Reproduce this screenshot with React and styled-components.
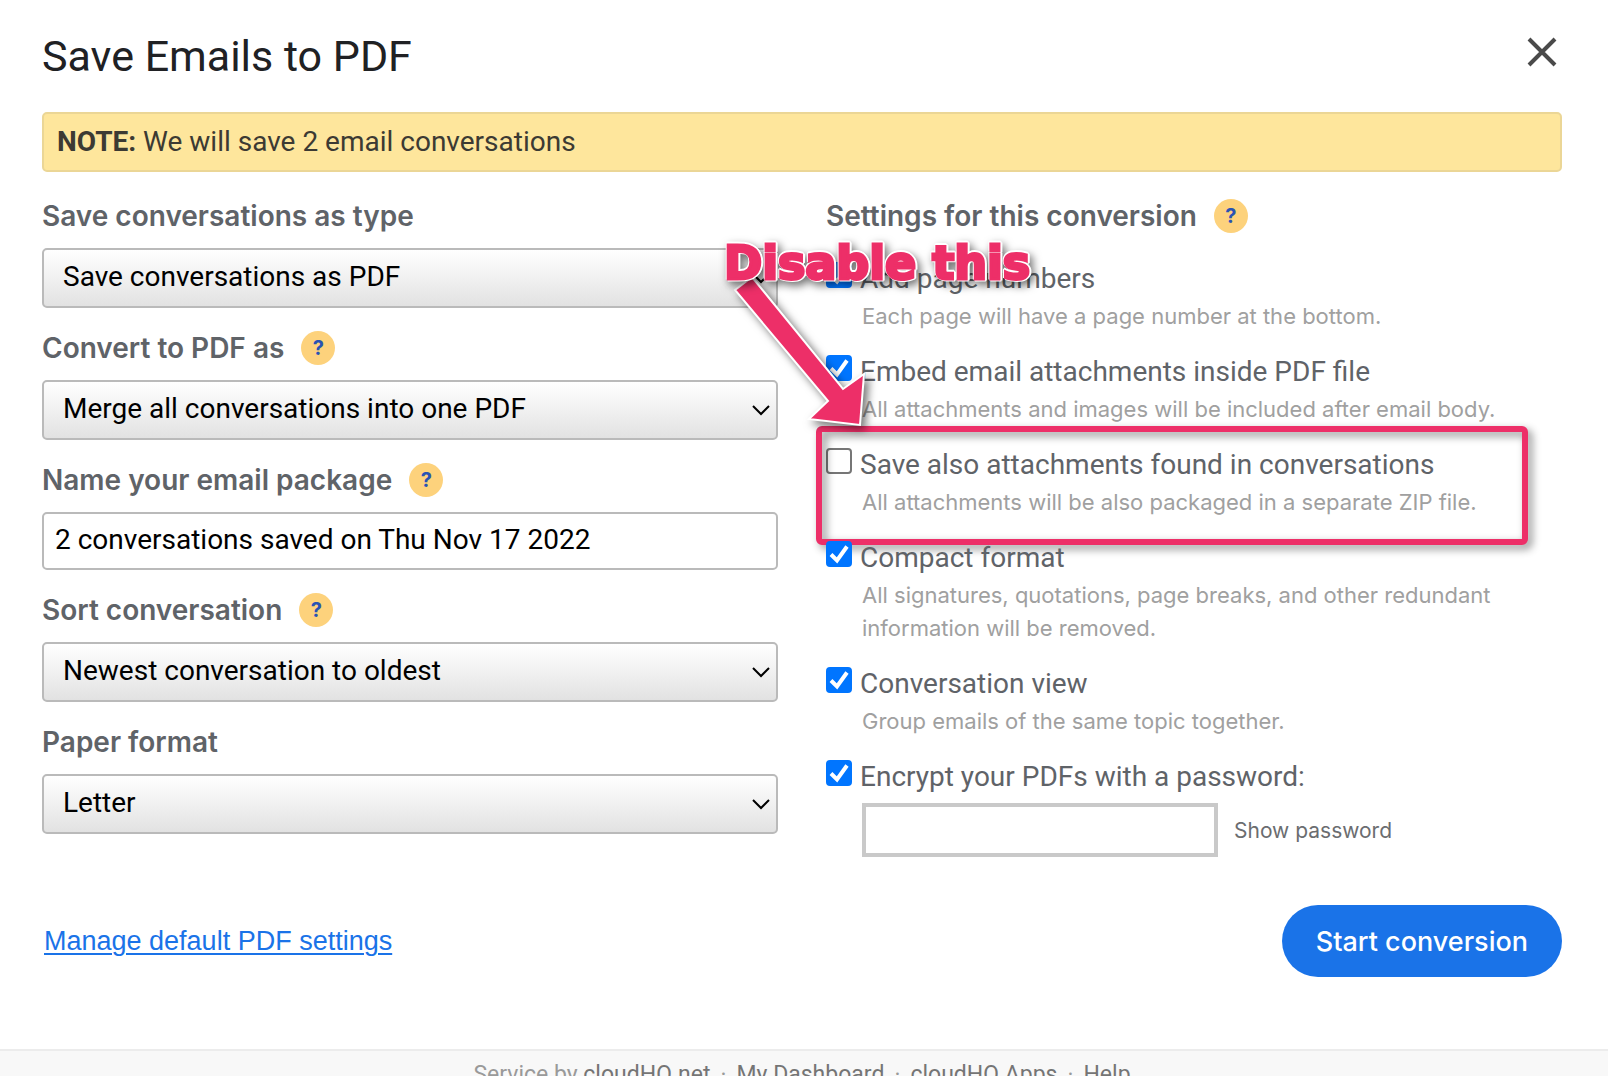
import React, { useState } from "react";
import styled, { createGlobalStyle } from "styled-components";

const GlobalStyle = createGlobalStyle`
  * {
    box-sizing: border-box;
  }

  html {
    overflow: hidden;
  }

  body {
    margin: 0;
    background-color: #ffffff;
    font-family: Roboto, "Liberation Sans", sans-serif;
    font-size: 28px;
    color: #5f6368;
  }
`;

const Dialog = styled.main`
  padding: 28px 46px 72px 42px;
`;

const Header = styled.header`
  display: flex;
  align-items: center;
  justify-content: space-between;
  height: 56px;
  margin-bottom: 28px;
`;

const Title = styled.h1`
  margin: 0;
  font-size: 43px;
  line-height: 56px;
  font-weight: 400;
  color: #202124;
`;

const CloseButton = styled.button`
  display: flex;
  align-items: center;
  justify-content: center;
  width: 40px;
  height: 48px;
  margin-bottom: 8px;
  padding: 0;
  border: none;
  background: none;
  color: #4a4a4a;
  cursor: pointer;
`;

const Note = styled.p`
  margin: 0;
  padding: 0 13px;
  border: 2px solid #ebd696;
  border-radius: 5px;
  background-color: #fee69c;
  line-height: 56px;
  color: #3c3a33;

  strong {
    font-weight: 700;
  }
`;

const Columns = styled.div`
  display: grid;
  grid-template-columns: 1fr 1fr;
  gap: 48px;
  margin-top: 26px;
`;

const FieldColumn = styled.div`
  display: flex;
  flex-direction: column;
  gap: 22px;
`;

const Heading = styled.div`
  display: flex;
  align-items: center;
  gap: 17px;
  height: 36px;
  font-family: Inter, "Liberation Sans", sans-serif;
  font-weight: 600;
`;

const HelpButton = styled.button`
  width: 34px;
  height: 34px;
  padding: 0;
  border: none;
  border-radius: 50%;
  background-color: #fdd27c;
  color: #2952b3;
  font-family: Inter, "Liberation Sans", sans-serif;
  font-size: 20px;
  font-weight: 700;
  line-height: 34px;
  cursor: pointer;
`;

const SelectBox = styled.div`
  position: relative;
  margin-top: 14px;

  svg {
    position: absolute;
    top: 0;
    bottom: 0;
    right: 8px;
    margin: auto;
    pointer-events: none;
  }
`;

const Select = styled.select`
  display: block;
  appearance: none;
  width: 100%;
  height: 60px;
  padding: 0 40px 3px 19px;
  border: 2px solid #bababa;
  border-radius: 5px;
  background: linear-gradient(#ffffff, #e2e2e2);
  font: inherit;
  color: #000000;
`;

const TextInput = styled.input`
  display: block;
  width: 100%;
  height: 58px;
  margin-top: 14px;
  padding: 0 11px 3px;
  border: 2px solid #bababa;
  border-radius: 5px;
  background-color: #ffffff;
  font: inherit;
  color: #000000;
`;

const SettingsColumn = styled.section`
  position: relative;
`;

const OptionList = styled.div`
  display: flex;
  flex-direction: column;
  gap: 22px;
  margin-top: 28px;
`;

const Option = styled.div`
  position: relative;
`;

const OptionRow = styled.div`
  display: flex;
  align-items: flex-start;
  gap: 8px;
  line-height: 34px;
`;

const CheckBox = styled.span`
  position: relative;
  width: 26px;
  height: 26px;

  svg {
    position: absolute;
    top: 0;
    left: 0;
    pointer-events: none;
  }
`;

const CheckInput = styled.input`
  display: block;
  appearance: none;
  width: 26px;
  height: 26px;
  margin: 0;
  border: 2px solid #767676;
  border-radius: 4px;
  background-color: #ffffff;

  &:checked {
    border-color: #0075ff;
    background-color: #0075ff;
  }
`;

const Hint = styled.p`
  margin: 4px 0 0 36px;
  font-family: Inter, "Liberation Sans", sans-serif;
  font-size: 22px;
  line-height: 33px;
  color: #a0a0a0;
`;

const PasswordRow = styled.div`
  display: flex;
  align-items: center;
  gap: 16px;
  margin: 9px 0 0 36px;
`;

const PasswordInput = styled.input`
  width: 356px;
  height: 54px;
  padding: 0 12px;
  border: 4px solid #c9c9c9;
  background-color: #ffffff;
  font: inherit;
`;

const ShowPassword = styled.button`
  padding: 0;
  border: none;
  background: none;
  font-family: Inter, "Liberation Sans", sans-serif;
  font-size: 21px;
  color: #6b6d70;
  cursor: pointer;
`;

const Actions = styled.div`
  display: flex;
  align-items: center;
  justify-content: space-between;
  margin-top: 48px;
`;

const ManageLink = styled.a`
  margin-left: 2px;
  font-family: "Liberation Sans", Arial, sans-serif;
  font-size: 27px;
  color: #1a73e8;
  text-decoration-thickness: 2px;
  text-underline-offset: 3px;
`;

const StartButton = styled.button`
  height: 72px;
  padding: 0 34px;
  border: none;
  border-radius: 36px;
  background-color: #1a73e8;
  color: #ffffff;
  font-family: Inter, "Liberation Sans", sans-serif;
  font-size: 27px;
  font-weight: 500;
  cursor: pointer;
`;

const Footer = styled.footer`
  display: flex;
  justify-content: center;
  gap: 10px;
  padding: 6px 4px 20px 0;
  border-top: 2px solid #ececec;
  background-color: #f8f8f8;
  font-size: 23px;
  line-height: 36px;
  color: #9a9a9a;

  a {
    color: #757575;
    text-decoration: none;
  }
`;

// pink call-out drawn over the form
const Highlight = styled.div`
  position: absolute;
  inset: -22px 34px -26px -10px;
  border: 6px solid #ed2f68;
  border-radius: 6px;
  filter: drop-shadow(4px 4px 4px rgba(0, 0, 0, 0.45));
  pointer-events: none;
`;

const Callout = styled.div`
  position: absolute;
  top: 37px;
  left: -102px;
  color: #ed2f68;
  pointer-events: none;
`;

const CalloutText = styled.div`
  position: relative;
  z-index: 1;
  font-family: "DejaVu Sans", sans-serif;
  font-size: 46px;
  font-weight: 700;
  line-height: 56px;
  white-space: nowrap;
  -webkit-text-stroke: 3px #ed2f68;
  filter: drop-shadow(1px 1px 0 #ffffff) drop-shadow(-1px -1px 0 #ffffff)
    drop-shadow(1px -1px 0 #ffffff) drop-shadow(3px 4px 4px rgba(0, 0, 0, 0.55));
`;

const CalloutArrow = styled.svg`
  position: absolute;
  top: 28px;
  left: 0;
  overflow: visible;
  filter: drop-shadow(4px 4px 4px rgba(0, 0, 0, 0.55));
`;

const Help = ({ topic }) => (
  <HelpButton type="button" aria-label={`Help: ${topic}`}>
    ?
  </HelpButton>
);

const SelectField = ({ id, label, help, options }) => (
  <div>
    <Heading>
      <label htmlFor={id}>{label}</label>
      {help && <Help topic={label} />}
    </Heading>
    <SelectBox>
      <Select id={id}>
        {options.map((option) => (
          <option key={option}>{option}</option>
        ))}
      </Select>
      <svg width="18" height="12" viewBox="0 0 18 12" fill="none" stroke="#000000" strokeWidth="2">
        <path d="M1 2l8 8 8-8" />
      </svg>
    </SelectBox>
  </div>
);

const SETTINGS = [
  {
    id: "page-numbers",
    label: "Add page numbers",
    hint: "Each page will have a page number at the bottom.",
    checked: true,
  },
  {
    id: "embed",
    label: "Embed email attachments inside PDF file",
    hint: "All attachments and images will be included after email body.",
    checked: true,
  },
  {
    id: "save-attachments",
    label: "Save also attachments found in conversations",
    hint: "All attachments will be also packaged in a separate ZIP file.",
    checked: false,
    highlighted: true,
  },
  {
    id: "compact",
    label: "Compact format",
    hint: "All signatures, quotations, page breaks, and other redundant information will be removed.",
    checked: true,
  },
  {
    id: "conversation-view",
    label: "Conversation view",
    hint: "Group emails of the same topic together.",
    checked: true,
  },
  {
    id: "encrypt",
    label: "Encrypt your PDFs with a password:",
    checked: true,
    password: true,
  },
];

function Setting({ setting }) {
  const [checked, setChecked] = useState(setting.checked);
  const [visible, setVisible] = useState(false);

  return (
    <Option>
      <OptionRow>
        <CheckBox>
          <CheckInput
            type="checkbox"
            id={setting.id}
            checked={checked}
            onChange={(e) => setChecked(e.target.checked)}
          />
          {checked && (
            <svg width="26" height="26" viewBox="0 0 26 26" fill="none" stroke="#ffffff" strokeWidth="4">
              <path d="M5 13.5l6 6L21 5.5" />
            </svg>
          )}
        </CheckBox>
        <label htmlFor={setting.id}>{setting.label}</label>
      </OptionRow>
      {setting.hint && <Hint>{setting.hint}</Hint>}
      {setting.password && (
        <PasswordRow>
          <PasswordInput type={visible ? "text" : "password"} aria-label="Password" />
          <ShowPassword type="button" onClick={() => setVisible(!visible)}>
            Show password
          </ShowPassword>
        </PasswordRow>
      )}
      {setting.highlighted && <Highlight />}
    </Option>
  );
}

export default function App() {
  return (
    <>
      <GlobalStyle />
      <Dialog>
        <Header>
          <Title>Save Emails to PDF</Title>
          <CloseButton type="button" aria-label="Close">
            <svg width="30" height="30" viewBox="0 0 30 30" fill="none" stroke="currentColor" strokeWidth="4">
              <path d="M2 2l26 26M28 2L2 28" />
            </svg>
          </CloseButton>
        </Header>

        <Note>
          <strong>NOTE:</strong> We will save 2 email conversations
        </Note>

        <Columns>
          <FieldColumn>
            <SelectField id="type" label="Save conversations as type" options={["Save conversations as PDF"]} />
            <SelectField id="convert" label="Convert to PDF as" help options={["Merge all conversations into one PDF"]} />
            <div>
              <Heading>
                <label htmlFor="package">Name your email package</label>
                <Help topic="Name your email package" />
              </Heading>
              <TextInput id="package" type="text" defaultValue="2 conversations saved on Thu Nov 17 2022" />
            </div>
            <SelectField id="sort" label="Sort conversation" help options={["Newest conversation to oldest"]} />
            <SelectField id="paper" label="Paper format" options={["Letter"]} />
          </FieldColumn>

          <SettingsColumn>
            <Heading>
              Settings for this conversion
              <Help topic="Settings for this conversion" />
            </Heading>
            <OptionList>
              {SETTINGS.map((setting) => (
                <Setting key={setting.id} setting={setting} />
              ))}
            </OptionList>
            <Callout>
              <CalloutText>Disable this</CalloutText>
              <CalloutArrow width="150" height="160" viewBox="0 0 150 160" fill="currentColor">
                <path
                  d="M11 27L28 14 119 126 140 111 136 162 85 156 104 138z"
                  stroke="#ffffff"
                  strokeWidth="2"
                />
              </CalloutArrow>
            </Callout>
          </SettingsColumn>
        </Columns>

        <Actions>
          <ManageLink href="#settings">Manage default PDF settings</ManageLink>
          <StartButton type="button">Start conversion</StartButton>
        </Actions>
      </Dialog>

      <Footer>
        <span>
          Service by <a href="#cloudhq">cloudHQ.net</a>
        </span>
        <span>·</span>
        <a href="#dashboard">My Dashboard</a>
        <span>·</span>
        <a href="#apps">cloudHQ Apps</a>
        <span>·</span>
        <a href="#help">Help</a>
      </Footer>
    </>
  );
}
